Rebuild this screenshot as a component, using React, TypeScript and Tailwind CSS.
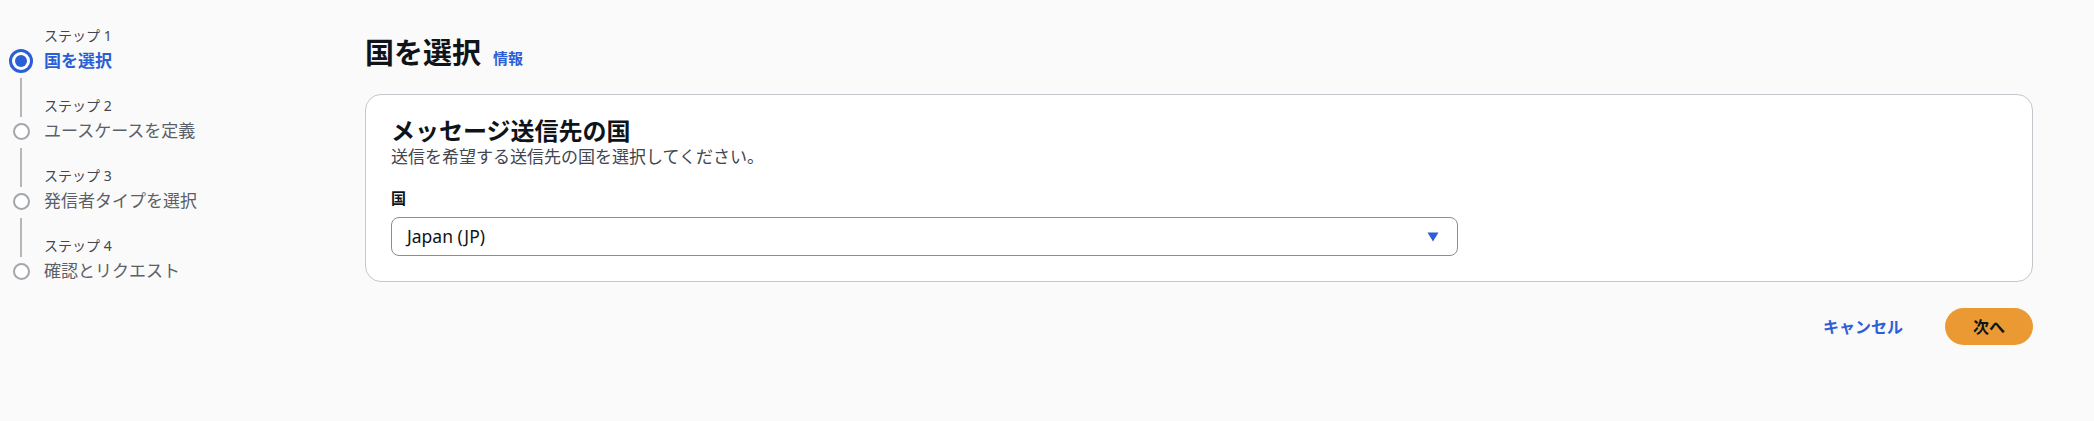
const steps = [
	{ label: 'ステップ 1', name: '国を選択' },
	{ label: 'ステップ 2', name: 'ユースケースを定義' },
	{ label: 'ステップ 3', name: '発信者タイプを選択' },
	{ label: 'ステップ 4', name: '確認とリクエスト' },
]

function StepList() {
	return (
		<nav className="w-[365px] shrink-0 pl-[9px] pt-[23px]">
			{steps.map((step, i) => {
				const active = i === 0
				return (
					<div key={step.label} className="flex h-[70px]">
						<div className="flex w-6 flex-col items-center">
							<div className="flex h-6 justify-center">
								{i > 0 && <div className="h-full w-[2px] bg-[#b6b6bd]" />}
							</div>
							<div className="flex h-7 items-center justify-center">
								{active ? (
									<div className="flex h-6 w-6 items-center justify-center rounded-full border-[3px] border-[#2c5fd6] bg-white">
										<div className="h-3 w-3 rounded-full bg-[#2c5fd6]" />
									</div>
								) : (
									<div className="h-[17px] w-[17px] rounded-full border-[2.5px] border-[#a3a6ad] bg-white" />
								)}
							</div>
							<div className="flex flex-1 justify-center pt-[3px]">
								{i < steps.length - 1 && <div className="h-full w-[2px] bg-[#b6b6bd]" />}
							</div>
						</div>
						<div className="ml-[11px] flex flex-col">
							<div className="flex h-6 items-center text-[14px] text-[#414650]">{step.label}</div>
							<div
								className={
									active
										? 'flex h-7 items-center text-[17px] font-bold text-[#2c5fd6]'
										: 'flex h-7 items-center text-[17px] text-[#5b5f67]'
								}
							>
								{step.name}
							</div>
						</div>
					</div>
				)
			})}
		</nav>
	)
}

export default function App() {
	return (
		<div className="flex min-h-[421px] w-full bg-[#fafafa] font-['Noto_Sans','Noto_Sans_CJK_JP',sans-serif] text-[#0f141a]">
			<StepList />
			<main className="flex-1 pr-[61px] pt-[35px]">
				<div className="flex items-baseline">
					<h1 className="text-[29px] font-bold leading-[36px]">国を選択</h1>
					<a className="ml-3 text-[15px] font-bold text-[#2c5fd6]" href="#">
						情報
					</a>
				</div>
				<section className="mt-[23px] rounded-2xl border border-[#c6c6cd] bg-white px-[25px] pb-[25px] pt-[21px]">
					<h2 className="text-[24px] font-bold leading-[30px]">メッセージ送信先の国</h2>
					<p className="text-[17px] leading-[22px] text-[#424650]">送信を希望する送信先の国を選択してください。</p>
					<div className="mt-5 text-[15px] font-bold leading-5">国</div>
					<button className="mt-[9px] flex h-[39px] w-[1067px] items-center justify-between rounded-lg border border-[#8c8c94] bg-white pl-[15px] pr-[18px] text-[17.5px] text-[#0f141a]">
						<span>Japan (JP)</span>
						<svg width="12" height="10" viewBox="0 0 12 10">
							<path d="M0.5 0.5H11.5L6 9.5Z" fill="#2c5fd6" />
						</svg>
					</button>
				</section>
				<div className="mt-[26px] flex items-center justify-end">
					<button className="text-[16px] font-bold text-[#2c5fd6]">キャンセル</button>
					<button className="ml-[42px] h-[37px] w-[88px] rounded-full bg-[#eb9a33] text-[16px] font-bold text-[#0f141a]">
						次へ
					</button>
				</div>
			</main>
		</div>
	)
}
